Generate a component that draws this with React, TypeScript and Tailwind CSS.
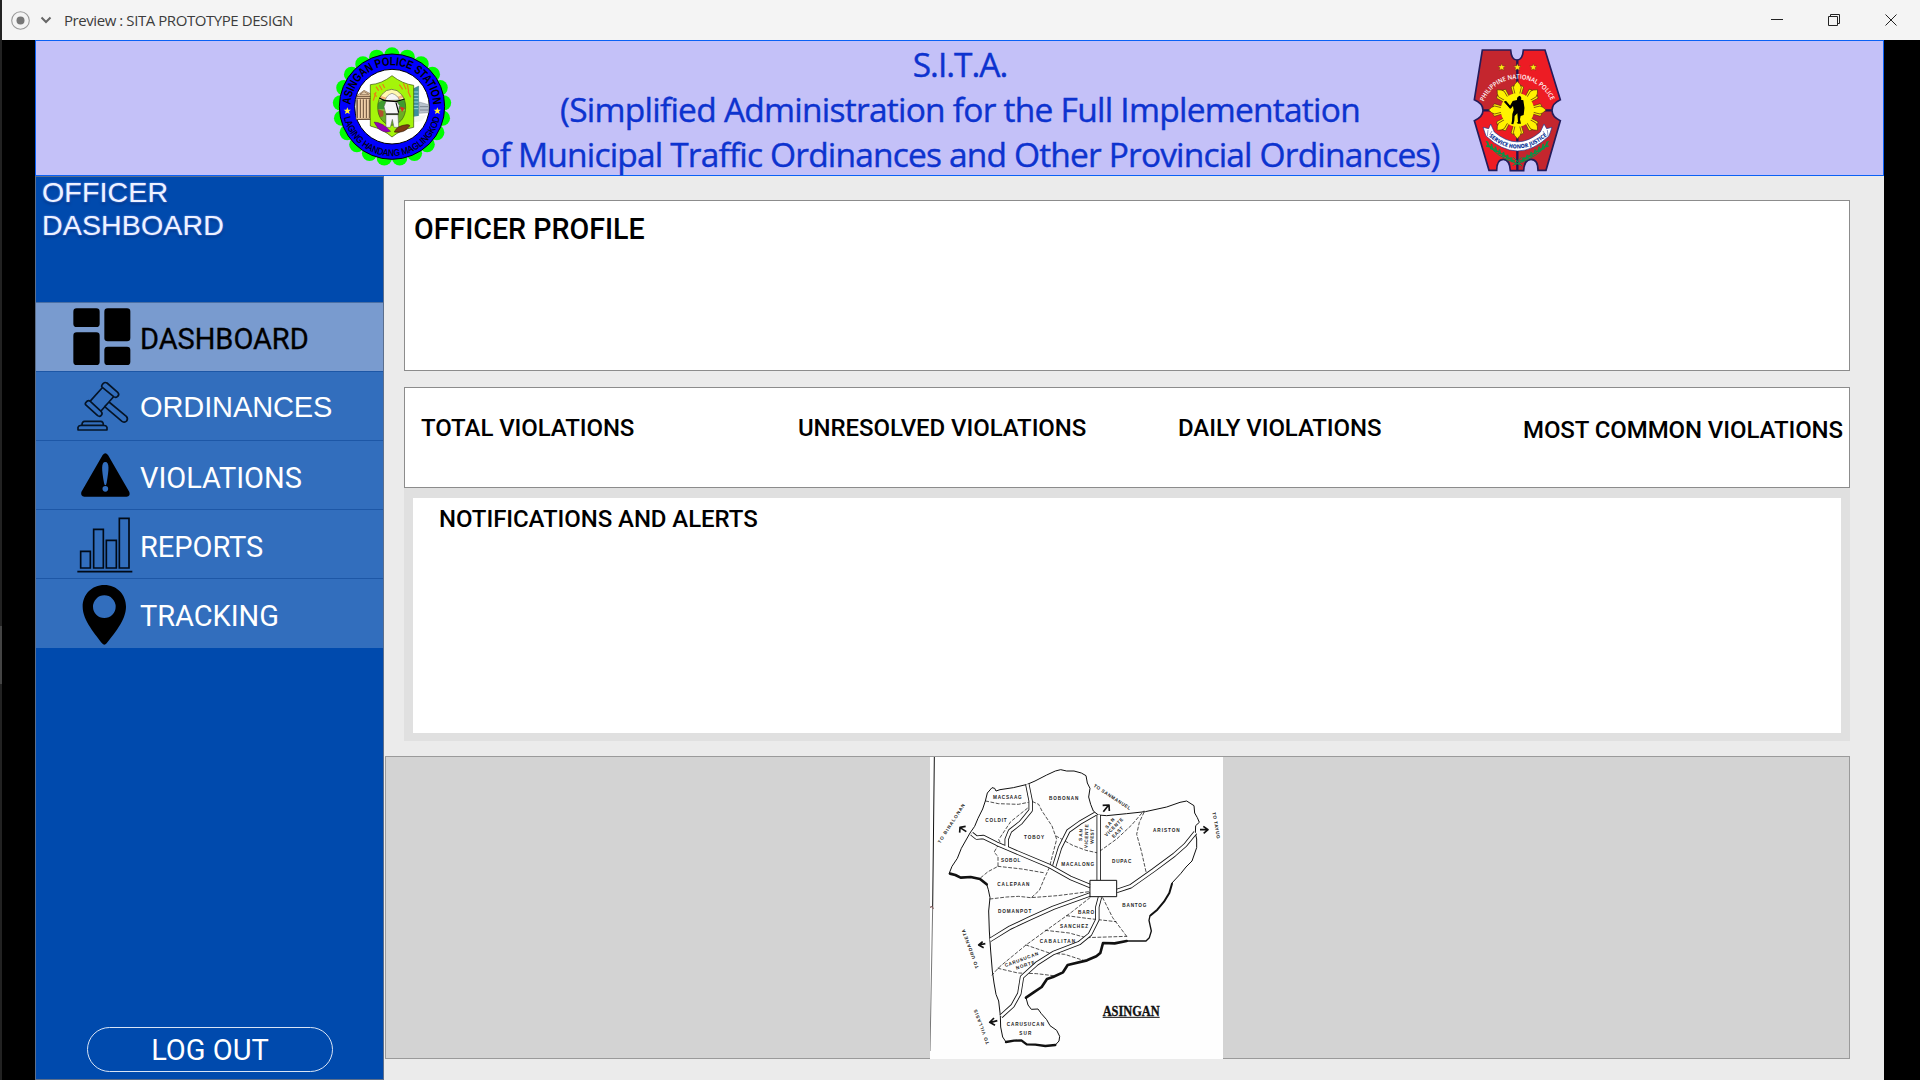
import React from "react";

const roboto = "font-[Roboto,'Liberation_Sans',sans-serif]";

function StationSeal() {
  const scallops = Array.from({ length: 21 }, (_, i) => {
    const a = ((i * 360) / 21 + 90) * (Math.PI / 180);
    return <circle key={i} cx={216 + 155 * Math.cos(a)} cy={200 - 155 * Math.sin(a)} r={23} />;
  });
  return (
    <svg className="h-[134px] w-[140px] shrink-0" viewBox="0 3 420 402">
      <defs>
        <path id="sealTop" d="M92 200 A124 124 0 0 1 340 200" />
        <path id="sealBottom" d="M69 201 A147 147 0 0 0 363 201" />
        <clipPath id="sealOval">
          <ellipse cx="215" cy="202" rx="42" ry="54" />
        </clipPath>
      </defs>
      <g fill="#00ff00">{scallops}</g>
      <circle cx="216" cy="200" r="158" fill="#0000ff" stroke="#000" strokeWidth="3" />
      <circle cx="216" cy="200" r="112" fill="#fff" stroke="#000" strokeWidth="3" />
      <g fontFamily="Liberation Sans" fill="#000">
        <text fontSize="36" fontWeight="700">
          <textPath href="#sealTop" startOffset="6" textLength="378" lengthAdjust="spacingAndGlyphs">ASINGAN POLICE STATION</textPath>
        </text>
        <text fontSize="28" stroke="#000" strokeWidth=".6">
          <textPath href="#sealBottom" startOffset="32" textLength="398" lengthAdjust="spacingAndGlyphs">LAGING HANDANG MAGLINGKOD</textPath>
        </text>
      </g>
      <g fill="#ffee33">
        <path d="M82 202l3 7h8l-6 5 2 8-7-4-7 4 2-8-6-5h8z" />
        <path d="M352 202l3 7h8l-6 5 2 8-7-4-7 4 2-8-6-5h8z" />
      </g>
      <g stroke="#4b3220" strokeWidth="1.5">
        <path d="M110 168l22-17 22 12v74l-46 2z" fill="#f0cfa8" />
        <path d="M108 169h46M110 175h44M112 178v56M121 178v56M130 178v56M139 178v56M148 178v56M108 238h46" fill="none" strokeWidth="2.5" />
        <path d="M120 163l12-8 14 8z" fill="#f6dcb9" />
      </g>
      <path d="M272 150l24-12v94h-24z" fill="#3c8f9c" stroke="#24515a" />
      <path d="M276 156h19M276 166h19M276 176h19M276 186h19M276 196h19M276 206h19" stroke="#9ad3dc" strokeWidth="3" />
      <path d="M298 186l28 8v24l-28 2z" fill="#b9c2cc" stroke="#59636c" />
      <path d="M300 200h25M300 210h25" stroke="#58636f" strokeWidth="2" />
      <path d="M268 232l52-8-14 18-36 8z" fill="#f4f7f2" />
      <path d="M151 134 Q184 132 216 107 Q248 132 281 136 V262 Q244 268 216 291 Q190 268 151 258z" fill="#a4f50a" stroke="#334d00" strokeWidth="2" />
      <g clipPath="url(#sealOval)">
        <rect x="170" y="145" width="90" height="115" fill="#8cc63f" />
        <rect x="170" y="145" width="90" height="34" fill="#fff9b0" />
        <path d="M170 164l45 14 45-18v10l-45 14-45-12z" fill="#f7b57a" />
        <path d="M172 190l20-12 30 10 38-10v30h-88z" fill="#3f9b2f" />
        <path d="M170 212h90v50h-90z" fill="#6cad25" />
        <path d="M174 208l16 5v16l-18 4z" fill="#b0512f" />
      </g>
      <ellipse cx="215" cy="202" rx="42" ry="54" fill="none" stroke="#3f5a12" strokeWidth="2" />
      <g fill="#f6f6f6" stroke="#555" strokeWidth="1.5">
        <path d="M196 182q2-16 20-22 18 6 22 20z" />
        <path d="M198 184h32l8 12-4 26h-36l-6-22z" />
        <path d="M198 224h36l2 38h-14l-5-24-6 24h-13z" />
      </g>
      <path d="M178 174l14 7 36 4 26-8M228 188l8 30M198 222h38" fill="none" stroke="#000" strokeWidth="3.5" />
      <path d="M240 200l14 4-8 12z" fill="#dc2b20" />
      <path d="M162 246q24 0 50 28-10 5-24 0-16-6-26-28z" fill="#9300b8" stroke="#35003f" />
      <path d="M223 276q7-19 38-22 14 0 4 8-12 18-42 14z" fill="#7d3e16" stroke="#331600" strokeWidth="2" />
      <path
        d="M168 140l8 12m2-16l8 14m2-18l6 12m-26 12l-8 26m2-22l8 10M238 134l10 14m2-18l8 18m4-14l4 20m-2 0l8 18"
        stroke="#e97e13"
        strokeWidth="3.5"
        fill="none"
      />
    </svg>
  );
}

function PoliceBadge() {
  const outline =
    "M67 30H152Q154 60 171 60Q188 60 190 30H255L301 179Q276 190 276 211Q276 231 301 242L258 391H234Q234 358 213 358Q193 358 191 392H151Q149 358 130 358Q110 358 110 391H87L43 242Q69 231 69 211Q69 190 43 179Z";
  const rays = [0, 45, 90, 135, 180, 225, 270, 315];
  const star = "l3 7h8l-6 5 2 8-7-4-7 4 2-8-6-5h8z";
  const leaves = [0, 1, 2, 3, 4, 5, 6];
  return (
    <svg className="h-[134px] w-[120px] shrink-0" viewBox="0 3 360 402">
      <defs>
        <clipPath id="badgeClip">
          <path d={outline} />
        </clipPath>
        <path id="badgeTop" d="M71 187A109 109 0 0 1 275 187" />
        <path id="badgeMotto" d="M84 287Q172 364 262 287" />
      </defs>
      <g clipPath="url(#badgeClip)">
        <path d="M30 20h142v190H30zM172 210h140v190H172z" fill="#c4262e" />
        <path d="M172 20h140v190H172zM30 210h142v190H30z" fill="#ed1c24" />
        <path d="M172 50v350M60 211h225" stroke="#211551" strokeWidth="7" />
      </g>
      <path d={outline} fill="none" stroke="#241c5a" strokeWidth="5" />
      <g fill="#ffe914" stroke="#6b3510" strokeWidth="1.2">
        <path d={"M125 71" + star} />
        <path d={"M172 71" + star} />
        <path d={"M220 71" + star} />
      </g>
      <text fontFamily="Open Sans" fontSize="19" fontWeight="600" fill="#fff">
        <textPath href="#badgeTop" startOffset="2" textLength="256" lengthAdjust="spacingAndGlyphs">PHILIPPINE NATIONAL POLICE</textPath>
      </text>
      <g fill="#fff200" stroke="#5b2a12" strokeWidth="2">
        {rays.map((r) => (
          <g key={r} transform={`rotate(${r} 172 210)`}>
            <path d="M161 167L153 141 161 136 167 167z" />
            <path d="M183 167L191 141 183 136 177 167z" />
            <path d="M166 166L160 142Q162 133 172 124Q182 133 184 142L178 166z" />
          </g>
        ))}
      </g>
      <circle cx="172" cy="210" r="50" fill="#fff200" />
      <g fill="#000">
        <path d="M171 180q-1-10 8-13 7 4 4 12l7 2q6 22 1 44l-9 3-2 10 3 13h-9l-4-3 4-2-2-26-8 8-1 14-3 11-6-1 2-10 1-20 4-12-2-12-7 8-20-20 3-3 15 14 8-14z" />
        <path d="M133 185l5-3 16 20-4 4z" />
      </g>
      <g stroke="#079447" strokeWidth="5" fill="none">
        <path d="M78 303Q102 350 180 374M266 303Q242 350 164 374M160 352l26 26M184 352l-26 26" strokeWidth="3" />
        {leaves.map((i) => (
          <g key={i}>
            <path d={`M${82 + i * 12} ${304 + i * 8}l3 14M${78 + i * 12} ${318 + i * 7}l15 3`} />
            <path d={`M${262 - i * 12} ${304 + i * 8}l-3 14M${266 - i * 12} ${318 + i * 7}l-15 3`} />
          </g>
        ))}
      </g>
      <path
        d="M69 262L86 266 92 252 103 276Q172 335 241 276L252 252 260 266 276 262 267 288Q172 378 78 288z"
        fill="#fff"
        stroke="#1d338b"
        strokeWidth="2"
      />
      <path d="M84 270l-2 18M262 270l2 18M96 273l-7 12M249 273l7 12" stroke="#1d338b" strokeWidth="1.5" />
      <text fontFamily="Open Sans" fontSize="17" fontWeight="800" fill="#17419d">
        <textPath href="#badgeMotto" startOffset="4" textLength="193" lengthAdjust="spacingAndGlyphs">SERVICE HONOR JUSTICE</textPath>
      </text>
    </svg>
  );
}

type Label = [string, number, number, number, number?];

const mapLabels: Label[] = [
  ["MACSAAG", 262, 144, 86],
  ["BOBONAN", 431, 146, 88],
  ["COLDIT", 228, 214, 64],
  ["TOBOY", 342, 264, 60],
  ["SOBOL", 272, 334, 58],
  ["CALEPAAN", 280, 404, 96],
  ["MACALONG", 473, 346, 98],
  ["DUPAC", 605, 337, 58],
  ["ARISTON", 739, 242, 80],
  ["BANTOG", 643, 469, 72],
  ["DOMANPOT", 284, 486, 100],
  ["BARO", 498, 489, 48],
  ["SANCHEZ", 462, 530, 84],
  ["CABALITAN", 412, 576, 106],
  ["CARUSUCAN", 306, 630, 106, -20],
  ["NORTE", 317, 647, 58, -18],
  ["CARUSUCAN", 316, 824, 112],
  ["SUR", 316, 851, 36],
  ["SAN", 487, 252, 36, -88],
  ["VICENTE", 504, 256, 72, -88],
  ["WEST", 521, 256, 44, -88],
  ["SAN", 573, 220, 36, -50],
  ["VICENTE", 585, 232, 72, -45],
  ["EAST", 596, 247, 42, -45],
  ["TO  BINALONAN", 98, 220, 138, -57],
  ["TO  SANMANUEL", 574, 142, 130, 33],
  ["TO TAYUG", 884, 224, 80, 80],
  ["TO URDANETA", 155, 592, 124, 250],
  ["TO VILLASIS", 189, 826, 110, 250],
];

const roads = [
  "M155 248L170 260 190 258 230 278 262 292 390 346 450 380 512 406",
  "M322 100L332 150 332 178 302 215 270 240 260 265 260 292",
  "M403 345L420 290 445 240 480 215 527 188",
  "M536 192V388",
  "M590 420L632 406 700 358 762 312 796 282 826 245",
  "M512 430L400 470 330 502 270 530 210 567",
  "M540 438L532 468 532 506 510 550 478 576 400 606 350 638 306 678 298 728 278 764 243 796",
];

const dashes = [
  "M197 150l38 8 60 2 30-6",
  "M322 172l-50 40-36 54 8 14",
  "M338 152l18 8 10 20 30 45 14 40-22 84",
  "M408 255l50 28 40 15 36 8",
  "M540 300l50-36 45-42 36-42",
  "M672 184L658 214 650 250 664 300 678 362",
  "M236 280l-14 24 12 12 0 30-30 16-24 20",
  "M234 346l72 8 70 12",
  "M388 350l-14 30-16 38-24 22",
  "M210 444l50-6 36-2 36 4 80-6 95-12",
  "M510 440l-56 44-78 56-58 42-80 66-22 24",
  "M440 494l60 8 88 10",
  "M376 538l72 8 50 14 122-4",
  "M548 440l30 60 42 56",
  "M318 582l70 24 46 4 56 18",
  "M234 652l60 14 56 2 50 6",
];

function MunicipalMap() {
  return (
    <svg className="h-[302px] w-[293px] bg-[#fefefe]" viewBox="30 18 879 906">
      <path d="M43 18L38 470" stroke="#111" strokeWidth="3" fill="none" />
      <path d="M38 470L30 900" stroke="#777" strokeWidth="3" fill="none" />
      <path d="M30 470q6-8 10 4" stroke="#866" strokeWidth="4" fill="none" />
      <g fill="none" stroke="#111" strokeLinejoin="round" strokeLinecap="round">
        <path
          strokeWidth="3"
          d="M88 366L96 346 112 322 124 292 150 246 164 226 174 202 188 174 196 150 202 126 216 110 224 112 228 120 240 116 280 110 322 100 345 90 380 72 406 60 422 56 440 60 462 60 484 66 498 74 502 96 510 112 506 138 512 160 520 180 535 192 560 194 620 188 676 182 740 168 780 154 800 150 822 164 824 186 832 200 838 214 827 224 826 246 830 264 830 290 816 330 798 348 782 368 756 396"
        />
        <path strokeWidth="6" d="M756 398L748 426 732 452 712 476 692 493" />
        <path strokeWidth="4" d="M690 494L687 508 694 540 688 560 678 570 620 570" />
        <path strokeWidth="8" d="M620 570L584 577 549 576 541 606 529 616 501 628 443 642 429 664 399 678 381 684 365 708 341 724 318 740" />
        <path strokeWidth="3" d="M318 740L324 762 334 775 354 774 364 788 380 806 390 824 410 838 419 856 417 870 406 882" />
        <path strokeWidth="7" d="M406 882L376 885 346 881 320 880 304 868 282 869 258 873" />
        <path strokeWidth="3" d="M258 873L248 858 242 828 241 794 236 750 228 730 222 696 217 660 212 600 208 540 206 480 210 440 205 416 200 400" />
        <path strokeWidth="8" d="M200 400L180 384 152 378 122 380 106 372 90 368" />
        {dashes.map((d) => (
          <path key={d} d={d} strokeWidth="2.2" strokeDasharray="9 7" />
        ))}
        {roads.map((d) => (
          <path key={d} d={d} strokeWidth="13" strokeLinecap="butt" />
        ))}
        {roads.map((d) => (
          <path key={d} d={d} strokeWidth="8" stroke="#fff" strokeLinecap="butt" />
        ))}
        <rect x="511" y="388" width="79" height="49" fill="#fff" strokeWidth="3" />
        <g strokeWidth="5" strokeLinecap="butt">
          <path d="M139 242l-20-13M119 245l1-16 17-3" />
          <path d="M550 182l16-20M548 163l19-1 1 18" />
          <path d="M840 236h22M850 226l14 10-13 11" />
          <path d="M196 578l-20 4M188 572l-12 10 15 8" />
          <path d="M232 809l-22 6M222 801l-13 13 16 9" />
        </g>
      </g>
      <g fontFamily="Liberation Sans" fontWeight="700" fontSize="14" fill="#222" textAnchor="middle">
        {mapLabels.map(([t, x, y, w, r], i) => (
          <text key={i} x={x} y={y} textLength={w} lengthAdjust="spacing" transform={r ? `rotate(${r} ${x} ${y})` : undefined}>
            {t}
          </text>
        ))}
      </g>
      <text x="548" y="795" textLength="171" lengthAdjust="spacingAndGlyphs" fontFamily="Liberation Serif" fontWeight="700" fontSize="41" fill="#111" stroke="#111">
        ASINGAN
      </text>
      <path d="M548 799h171" stroke="#111" strokeWidth="3" />
    </svg>
  );
}

const icons = {
  dashboard: (
    <>
      <rect x="220" y="416" width="79" height="56" rx="10" />
      <rect x="313" y="416" width="78" height="99" rx="10" />
      <rect x="220" y="488" width="79" height="98" rx="10" />
      <rect x="313" y="531" width="78" height="55" rx="10" />
    </>
  ),
  gavel: (
    <g fill="none" stroke="#051426" strokeWidth="5" strokeLinejoin="round">
      <path d="M306 646q6-11 15-6l33 29q5 6-2 12-5 4-11 0l-34-28q-4-4-1-7zM257 699q7-9 14-4l33 31q5 6-1 12-4 4-10 0l-34-31q-5-4-2-8zM306 655l-36 40M340 682l-37 42M327 697l52 43q6 6 1 14-6 6-14 1l-52-44zM234 781v-8q2-6 9-6h69q7 0 9 6v8zM246 766q0-11 8-11h48q8 0 8 11" />
    </g>
  ),
  warning: (
    <path
      fillRule="evenodd"
      d="M308 505q8-11 16 0l64 111q4 13-8 14H253q-12-1-9-14zM316 526c-13 0-11 24-4 62 2 10 6 10 8 0 7-38 9-62-4-62zm0 72a8 8 0 100 17 8 8 0 000-17z"
    />
  ),
  bars: (
    <g fill="none" stroke="#000a18" strokeWidth="5">
      <path d="M242 794h29v50h-29zM281 728h29v116h-29zM319 761h30v83h-30zM358 695h29v149h-29zM232 855h165" />
    </g>
  ),
  pin: (
    <path
      fillRule="evenodd"
      d="M313 892c-38 0-65 29-65 65 0 42 40 84 58 110q7 8 14 0c19-26 58-68 58-110 0-36-27-65-65-65zm0 31a34 34 0 110 68 34 34 0 010-68z"
    />
  ),
};

type Item = { label: string; icon: React.ReactNode; view: string; row: string; text: string };

const items: Item[] = [
  { label: "DASHBOARD", icon: icons.dashboard, view: "210 397 210 207", row: "h-[69px] bg-[#799bcf] border-[#4a6fa5]", text: "text-black text-[29px] tracking-[-0.05px] pt-[3px] [-webkit-text-stroke:0.3px_#000]" },
  { label: "ORDINANCES", icon: icons.gavel, view: "210 604 210 207", row: "h-[69px] bg-[#326ebd] border-[#1d57a6]", text: "text-white text-[29px] tracking-[-0.1px] pt-[2px] font-['Liberation_Sans',sans-serif]" },
  { label: "VIOLATIONS", icon: icons.warning, view: "210 460 210 207", row: "h-[69px] bg-[#326ebd] border-[#1d57a6]", text: "text-white text-[29px] tracking-[-0.05px] pt-[6px]" },
  { label: "REPORTS", icon: icons.bars, view: "210 667 210 207", row: "h-[69px] bg-[#326ebd] border-[#1d57a6]", text: "text-white text-[29px] tracking-[-0.05px] pt-[6px]" },
  { label: "TRACKING", icon: icons.pin, view: "210 874 210 207", row: "h-[70px] bg-[#326ebd] border-[#1d57a6]", text: "text-white text-[29px] tracking-[-0.05px] pt-[5px]" },
];

function TitleBar() {
  return (
    <div className="flex h-10 shrink-0 items-center bg-[#f4f4f4] pl-[9px] text-[#3c3c3c]">
      <svg className="size-[19px]" viewBox="0 0 19 19">
        <circle cx="9.5" cy="9.5" r="8.8" fill="none" stroke="#999" strokeWidth="1.1" />
        <circle cx="9.5" cy="9.5" r="4" fill="#777" />
      </svg>
      <svg className="ml-[10px] h-3 w-3" viewBox="0 0 12 12" fill="none" stroke="#666" strokeWidth="2">
        <path d="M1.5 3.500L6 8l4.500-4.500" />
      </svg>
      <span className="ml-[12px] whitespace-nowrap font-['Open_Sans',sans-serif] text-[15px] tracking-[-0.43px]">Preview : SITA PROTOTYPE DESIGN</span>
      <svg className="ml-auto mr-[22px] h-3 w-[128px]" viewBox="0 0 128 12" fill="none" stroke="#222">
        <path d="M1 5.500h12M58.500 2.500h9v9h-9zM60.500 2.500v-2h9v9h-2" />
        <path d="M115.500.500l11 11M126.500.500l-11 11" />
      </svg>
    </div>
  );
}

export default function App() {
  return (
    <div className={`flex h-[1080px] w-[1920px] overflow-hidden bg-black ${roboto}`}>
      <div className="flex w-[2px] shrink-0 flex-col bg-[#222]">
        <div className="mt-[626px] h-[58px] bg-[#444]" />
      </div>
      <div className="flex min-w-0 flex-1 flex-col">
        <TitleBar />
        <div className="ml-[33px] flex w-[1849px] flex-1 flex-col bg-[#ebebeb]">
          <header className="flex h-[136px] shrink-0 border border-[#0b61f5] bg-[#c4c1f8] pl-[284px]">
            <StationSeal />
            <div className="flex w-[1000px] shrink-0 flex-col items-center whitespace-nowrap pt-px font-['Open_Sans','Noto_Sans',sans-serif] text-[33.500px] leading-[45px] text-[#0d33cf] [-webkit-text-stroke:0.4px_#0d33cf]">
              <div className="tracking-[-1px]">S.I.T.A.</div>
              <div className="tracking-[-0.75px]">(Simplified Administration for the Full Implementation</div>
              <div className="tracking-[-0.83px]">of Municipal Traffic Ordinances and Other Provincial Ordinances)</div>
            </div>
            <PoliceBadge />
          </header>
          <div className="flex flex-1">
            <aside className="flex w-[349px] shrink-0 flex-col border border-[#5c6f8c] bg-[#004aad]">
              <div className="h-[125px] pl-[6px] font-['Liberation_Sans',sans-serif] text-[28.500px] leading-[33px] tracking-[0.15px] text-[#eef2ff] [text-shadow:0_0_2px_#6f9bff,0_2px_3px_#00307c]">
                <div className="-mt-px">
                  OFFICER
                  <br />
                  DASHBOARD
                </div>
              </div>
              <nav>
                {items.map((it) => (
                  <div key={it.label} className={`flex items-center border-t pl-[34px] ${it.row}`}>
                    <svg className="-mt-px h-[69px] w-[70px] shrink-0" viewBox={it.view}>
                      {it.icon}
                    </svg>
                    <span className={`whitespace-nowrap leading-[34px] ${it.text}`}>{it.label}</span>
                  </div>
                ))}
              </nav>
              <button className="mx-auto mb-[7px] mt-auto flex h-[45px] w-[246px] items-center justify-center rounded-full border border-[#d9e4f5] pl-px pt-[3px] text-[29px] text-white">
                LOG OUT
              </button>
            </aside>
            <main className="flex flex-1 flex-col pt-[24px] text-black">
              <section className="ml-[20px] h-[171px] w-[1446px] border border-[#8c8c8c] bg-white pl-[9px] pt-[11px] text-[28.600px] font-medium leading-[34px]">OFFICER PROFILE</section>
              <section className="ml-[20px] mt-[16px] flex h-[101px] w-[1446px] whitespace-nowrap border border-[#8c8c8c] bg-white pt-[26px] text-[24px] font-medium leading-[28px] tracking-[-0.08px]">
                <div className="w-[376px] pl-[16px]">TOTAL VIOLATIONS</div>
                <div className="w-[380px] pl-[17px]">UNRESOLVED VIOLATIONS</div>
                <div className="w-[345px] pl-[17px]">DAILY VIOLATIONS</div>
                <div className="pl-[17px] pt-[2px]">MOST COMMON VIOLATIONS</div>
              </section>
              <section className="ml-[20px] h-[253px] w-[1446px] bg-[#e0e0e0] px-[9px] pb-[8px] pt-[10px]">
                <div className="h-full bg-white pl-[26px] pt-[7px] text-[24px] font-medium leading-[28px] tracking-[-0.07px]">NOTIFICATIONS AND ALERTS</div>
              </section>
              <section className="ml-[1px] mt-[15px] flex h-[303px] w-[1465px] border border-[#9a9a9a] bg-[#d3d3d3] pl-[544px]">
                <MunicipalMap />
              </section>
            </main>
          </div>
        </div>
      </div>
    </div>
  );
}
